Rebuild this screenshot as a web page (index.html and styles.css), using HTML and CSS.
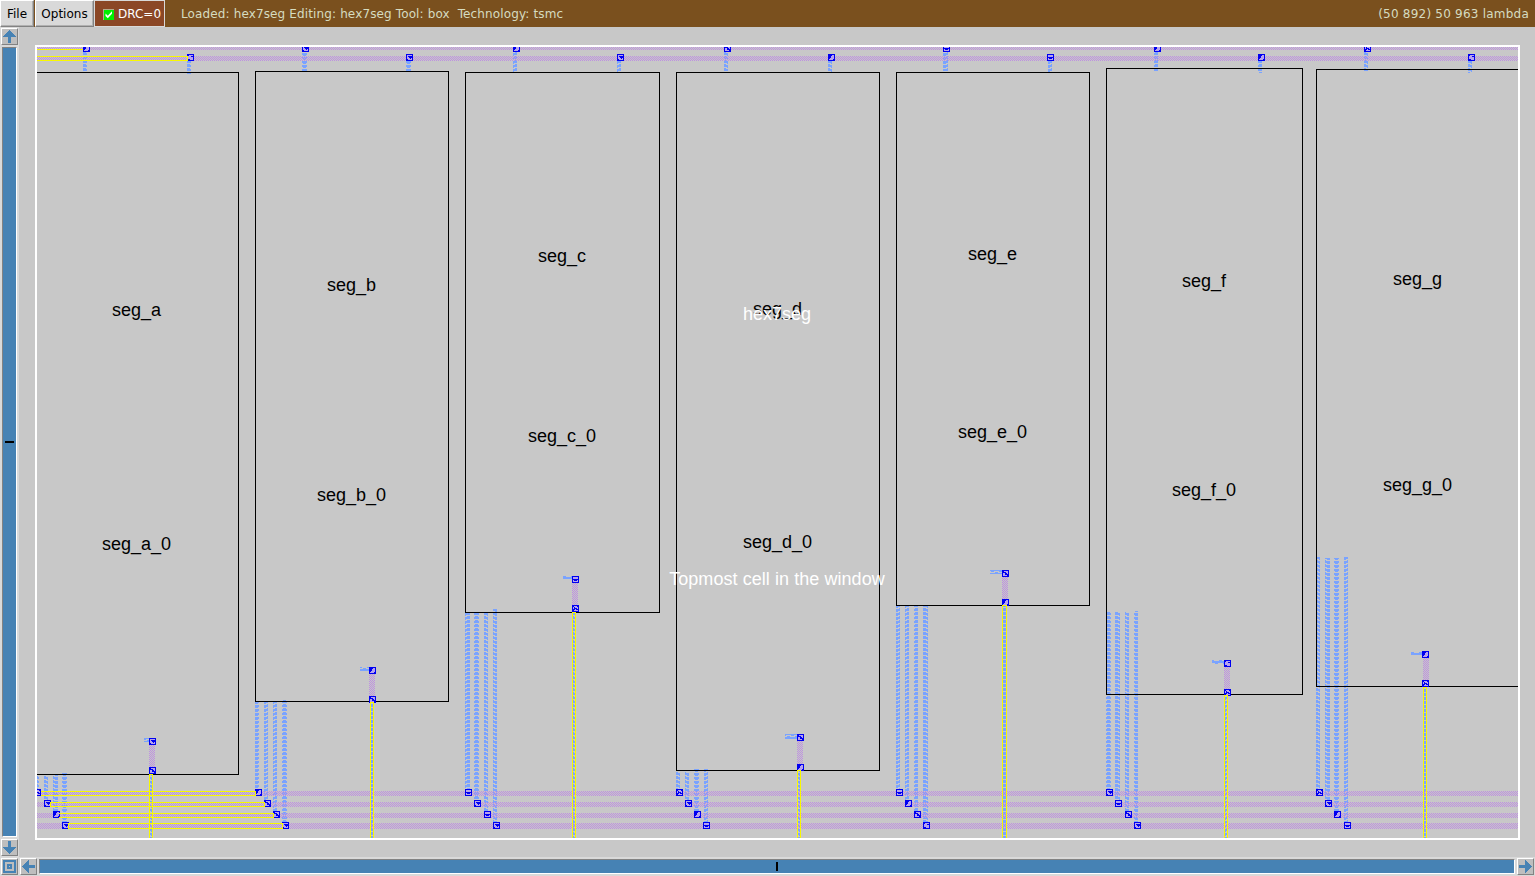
FILE: index.html
```html
<!DOCTYPE html>
<html lang="en">
<head>
<meta charset="utf-8">
<title>hex7seg</title>
<link rel="stylesheet" href="styles.css">
</head>
<body>
<header class="menubar">
  <button class="menu file">File</button>
  <button class="menu options">Options</button>
  <div class="drc"><svg class="check" viewBox="0 0 11 11"><rect width="11" height="11" fill="#b3a98d"/><path d="M1 1h10v10H1z" fill="#00f000"/><path d="M2.500 4.500l2.300 2.300L9 2.200v2.600L4.800 9.200L2.500 7z" fill="#fff"/></svg><span>DRC=0</span></div>
  <span class="status">Loaded: hex7seg Editing: hex7seg Tool: box&nbsp; Technology: tsmc</span>
  <span class="coords">(50 892) 50 963 lambda</span>
</header>
<main class="body">
  <aside class="vscroll">
    <button class="tool"><svg viewBox="0 0 13 13"><path d="M6 0h1v1h1v1h1v1h1v1h1v1h1v1h1v1H8v6H5V7H0V6h1V5h1V4h1V3h1V2h1V1h1z"/></svg></button>
    <div class="bar vertical"><i class="mark"></i></div>
    <button class="tool"><svg viewBox="0 0 13 13"><path d="M5 0h3v6h5v1h-1v1h-1v1h-1v1H9v1H8v1H7v1H6v-1H5v-1H4v-1H3V9H2V8H1V7H0V6h5z"/></svg></button>
  </aside>
  <section class="workspace">
    <svg class="layout" viewBox="37 47 1481 791" width="1481" height="791">
      <defs>
        <pattern id="metal1" width="8" height="4" patternUnits="userSpaceOnUse"><path d="M0 1h8v2H0zM3 0h3v1H3zM7 3h1v1H7zM0 3h2v1H0z" fill="#7aa3ff"/></pattern>
        <pattern id="metal2" width="2" height="2" patternUnits="userSpaceOnUse"><path d="M0 0h1v1H0zM1 1h1v1H1z" fill="#be92e0"/></pattern>
        <g id="box"><path d="M0 0h7v7H0z" fill="#0000f0"/><path d="M1 1h5v5H1z" fill="#b6a2ee"/></g>
        <g id="o"><use href="#box"/><path d="M1 1h1v1H1zM4 2h2v1H4zM1 5h2v1H1z" fill="#0000f0"/></g>
        <g id="x"><use href="#box"/><path d="M1 1h1v1H1zM5 1h1v1H5zM2 3h3v1H2zM1 4h2v1H1zM4 4h2v1H4zM1 5h1v1H1zM2 2h1v1H2z" fill="#0000f0"/></g>
        <g id="p"><use href="#box"/><path d="M2 2h4v1H2zM3 3h3v1H3zM4 4h1v1H4zM1 5h1v1H1z" fill="#0000f0"/></g>
        <g id="u"><use href="#box"/><path d="M1 1h3v1H1zM1 2h2v1H1zM1 3h2v1H1zM1 4h1v1H1zM5 5h1v1H5z" fill="#0000f0"/></g>
        <g id="d"><use href="#box"/><path d="M1 1h1v1H1zM1 2h3v1H1zM3 3h2v1H3zM3 4h3v1H3zM5 5h1v1H5z" fill="#0000f0"/></g>
        <g id="m"><use href="#box"/><path d="M1 3h5v1H1zM2 4h3v1H2z" fill="#0000f0"/></g>
      </defs>
      <g shape-rendering="crispEdges">
        <path fill="url(#metal1)" d="M83 52h4v19h-4zM302 52h5v19h-5zM513 52h4v20h-4zM724 52h4v19h-4zM943 52h5v19h-5zM1154 52h4v19h-4zM1364 52h4v19h-4z
          M187 61h4v13h-4zM406 61h5v10h-5zM617 61h4v11h-4zM828 61h4v11h-4zM1048 61h4v12h-4zM1258 61h4v12h-4zM1468 61h4v12h-4z
          M37 776h2v13h-2zM44 776h4v24h-4zM53 775h5v36h-5zM62 773h5v49h-5z
          M255 702h4v87h-4zM264 701h4v99h-4zM273 701h4v110h-4zM282 700h5v122h-5z
          M465 613h5v176h-5zM474 611h5v189h-5zM484 613h4v198h-4zM493 609h4v213h-4z
          M676 772h4v17h-4zM685 772h4v28h-4zM694 769h5v42h-5zM704 769h4v53h-4z
          M896 606h4v183h-4zM905 606h4v194h-4zM914 606h4v205h-4zM923 606h5v216h-5z
          M1106 612h5v177h-5zM1115 612h5v188h-5zM1125 612h4v199h-4zM1134 611h4v211h-4z
          M1316 557h4v232h-4zM1325 558h5v242h-5zM1334 558h5v253h-5zM1344 557h4v265h-4z
          M144 738h5v4h-5zM360 667h9v4h-9zM563 576h9v3h-9zM785 734h12v5h-12zM990 570h12v4h-12zM1212 660h12v4h-12zM1411 652h12v3h-12z
          M150 775h2v63h-2zM371 702h2v136h-2zM573 612h2v226h-2zM798 771h2v67h-2zM1003 605h3v233h-3zM1225 695h2v143h-2zM1424 687h2v151h-2z"/>
        <path fill="url(#metal2)" d="M37 47h1481v3H37zM37 56h1481v5H37zM37 791h1481v5H37zM37 802h1481v5H37zM37 813h1481v5H37zM37 823h1481v6H37z
          M149 745h6v22h-6zM369 674h6v22h-6zM572 583h6v22h-6zM797 741h6v23h-6zM1002 577h6v22h-6zM1224 667h6v22h-6zM1423 657h6v23h-6z"/>
        <path fill="none" stroke="#000" d="M37 72.500h201.500v702H37M255.500 71.500h193v630h-193zM465.500 72.500h194v540h-194zM676.500 72.500h203v698h-203zM896.500 72.500h193v533h-193zM1106.500 68.500h196v626h-196zM1518 69.500h-201.500v617H1518"/>
        <g>
          <use href="#u" x="83" y="45"/><use href="#p" x="302" y="45"/><use href="#u" x="513" y="45"/><use href="#d" x="724" y="45"/><use href="#m" x="943" y="45"/><use href="#u" x="1154" y="45"/><use href="#x" x="1364" y="45"/>
          <use href="#o" x="187" y="54"/><use href="#p" x="406" y="54"/><use href="#p" x="617" y="54"/><use href="#u" x="828" y="54"/><use href="#m" x="1047" y="54"/><use href="#u" x="1258" y="54"/><use href="#o" x="1468" y="54"/>
          <use href="#x" x="34" y="789"/><use href="#p" x="44" y="800"/><use href="#u" x="53" y="811"/><use href="#p" x="62" y="822"/>
          <use href="#u" x="255" y="789"/><use href="#d" x="264" y="800"/><use href="#d" x="273" y="811"/><use href="#p" x="282" y="822"/>
          <use href="#m" x="465" y="789"/><use href="#p" x="474" y="800"/><use href="#m" x="484" y="811"/><use href="#p" x="493" y="822"/>
          <use href="#x" x="676" y="789"/><use href="#p" x="685" y="800"/><use href="#u" x="694" y="811"/><use href="#m" x="703" y="822"/>
          <use href="#m" x="896" y="789"/><use href="#u" x="905" y="800"/><use href="#d" x="914" y="811"/><use href="#o" x="923" y="822"/>
          <use href="#p" x="1106" y="789"/><use href="#m" x="1115" y="800"/><use href="#d" x="1125" y="811"/><use href="#p" x="1134" y="822"/>
          <use href="#x" x="1316" y="789"/><use href="#p" x="1325" y="800"/><use href="#u" x="1334" y="811"/><use href="#m" x="1344" y="822"/>
          <use href="#p" x="149" y="738"/><use href="#d" x="149" y="767"/><use href="#u" x="369" y="667"/><use href="#d" x="369" y="696"/><use href="#m" x="572" y="576"/><use href="#x" x="572" y="605"/><use href="#d" x="797" y="734"/><use href="#u" x="797" y="764"/><use href="#d" x="1002" y="570"/><use href="#u" x="1002" y="599"/><use href="#o" x="1224" y="660"/><use href="#x" x="1224" y="689"/><use href="#u" x="1422" y="651"/><use href="#x" x="1422" y="680"/>
        </g>
        <path fill="none" stroke="#f8f800" d="M37 49.500h46M37 56.500h150.500v4H37M41 791.500h214.500v4H41M50.500 802.500h214v4h-214zM59 813.500h214.500v4H59M68.500 823.500h214v5h-214z
          M149.500 838v-63.500h3V838M370.500 838V702.500h3V838M572.500 838V612.500h3V838M797.500 838v-67.500h3V838M1002.500 838V605.500h4V838M1224.500 838V695.500h3V838M1423.500 838V687.500h3V838"/>
      </g>
      <g class="label">
        <text x="136.500" y="316">seg_a</text><text x="136.500" y="550">seg_a_0</text>
        <text x="351.500" y="291">seg_b</text><text x="351.500" y="501">seg_b_0</text>
        <text x="562" y="262">seg_c</text><text x="562" y="442">seg_c_0</text>
        <text x="777.500" y="315">seg_d</text><text x="777.500" y="548">seg_d_0</text>
        <text x="992.500" y="260">seg_e</text><text x="992.500" y="438">seg_e_0</text>
        <text x="1204" y="287">seg_f</text><text x="1204" y="496">seg_f_0</text>
        <text x="1417.500" y="285">seg_g</text><text x="1417.500" y="491">seg_g_0</text>
        <text class="top" x="777" y="320">hex7seg</text><text class="top wide" x="777" y="585">Topmost cell in the window</text>
      </g>
    </svg>
  </section>
</main>
<footer class="hscroll">
  <button class="tool"><svg viewBox="0 0 13 13"><path fill-rule="evenodd" d="M0 0h13v13H0zM2 2v9h9V2zM4 4h5v5H4zM6 6v1h1V6z"/></svg></button>
  <button class="tool"><svg viewBox="0 0 13 13"><path d="M0 6h1V5h1V4h1V3h1V2h1V1h1V0h1v5h6v3H7v5H6v-1H5v-1H4v-1H3V9H2V8H1V7H0z"/></svg></button>
  <div class="bar horizontal"><i class="mark"></i></div>
  <button class="tool"><svg viewBox="0 0 13 13"><path d="M13 6h-1V5h-1V4h-1V3H9V2H8V1H7V0H6v5H0v3h6v5h1v-1h1v-1h1v-1h1V9h1V8h1V7h1z"/></svg></button>
</footer>
</body>
</html>
```
FILE: styles.css
```css
* { box-sizing: border-box; }

body {
  margin: 0;
  width: 1535px;
  height: 876px;
  overflow: hidden;
  display: flex;
  flex-direction: column;
  background: #c8c8c8;
  font: 12px/15px "DejaVu Sans", sans-serif;
}

button { font: inherit; margin: 0; padding: 0; border-radius: 0; }

.menubar {
  display: flex;
  height: 27px;
  flex: none;
  align-items: stretch;
  background: #7a501e;
  color: #d6dcc0;
}

.menu {
  padding-top: 2px;
  background: #d9d9d9;
  color: #000;
  border: 1px solid;
  border-color: #fff #828282 #828282 #fff;
  box-shadow: inset -1px -1px #b0b0b0;
}

.file { width: 34px; margin-right: 1px; }
.options { width: 59px; }

.drc {
  display: flex;
  align-items: center;
  gap: 4px;
  width: 71px;
  padding: 1px 0 0 8px;
  background: #8b4726;
  color: #fff;
  border: 1px solid #d9d9d9;
}

.check { width: 11px; height: 11px; flex: none; }
.status { margin: 7px 0 0 16px; letter-spacing: 0.13px; }
.coords { margin: 7px 6px 0 auto; letter-spacing: 0.22px; }

.body { flex: 1; display: flex; min-height: 0; }

.vscroll {
  width: 19px;
  display: flex;
  flex-direction: column;
  padding: 1px;
  background: #d9d9d9;
}

.tool {
  width: 17px;
  height: 17px;
  flex: none;
  display: grid;
  place-items: center;
  background: #bebebe;
  border: 1px solid;
  border-color: #fff #828282 #828282 #fff;
}

.tool svg { width: 13px; height: 13px; fill: #4682b4; shape-rendering: crispEdges; }

.bar {
  flex: 1;
  display: grid;
  place-items: center;
  background: #4682b4;
  border: 1px solid;
  border-color: #828282 #fff #fff #828282;
}

.vertical { margin: 2px 1px; }
.horizontal { margin: 1px 2px; }
.vertical .mark { width: 9px; height: 2px; background: #000; }
.horizontal .mark { width: 2px; height: 9px; background: #000; }

.workspace { flex: 1; padding: 18px 15px 17px 16px; }
.layout { display: block; box-sizing: content-box; border: 2px solid #fff; }
.label { font: 18px "Liberation Sans", Arial, sans-serif; text-anchor: middle; fill: #000; }
.top { fill: #fff; }
.wide { letter-spacing: 0.06px; }

.hscroll {
  display: flex;
  flex: none;
  height: 19px;
  padding: 1px;
  background: #d9d9d9;
}

.hscroll .tool:nth-child(2) { margin-left: 2px; }
```
